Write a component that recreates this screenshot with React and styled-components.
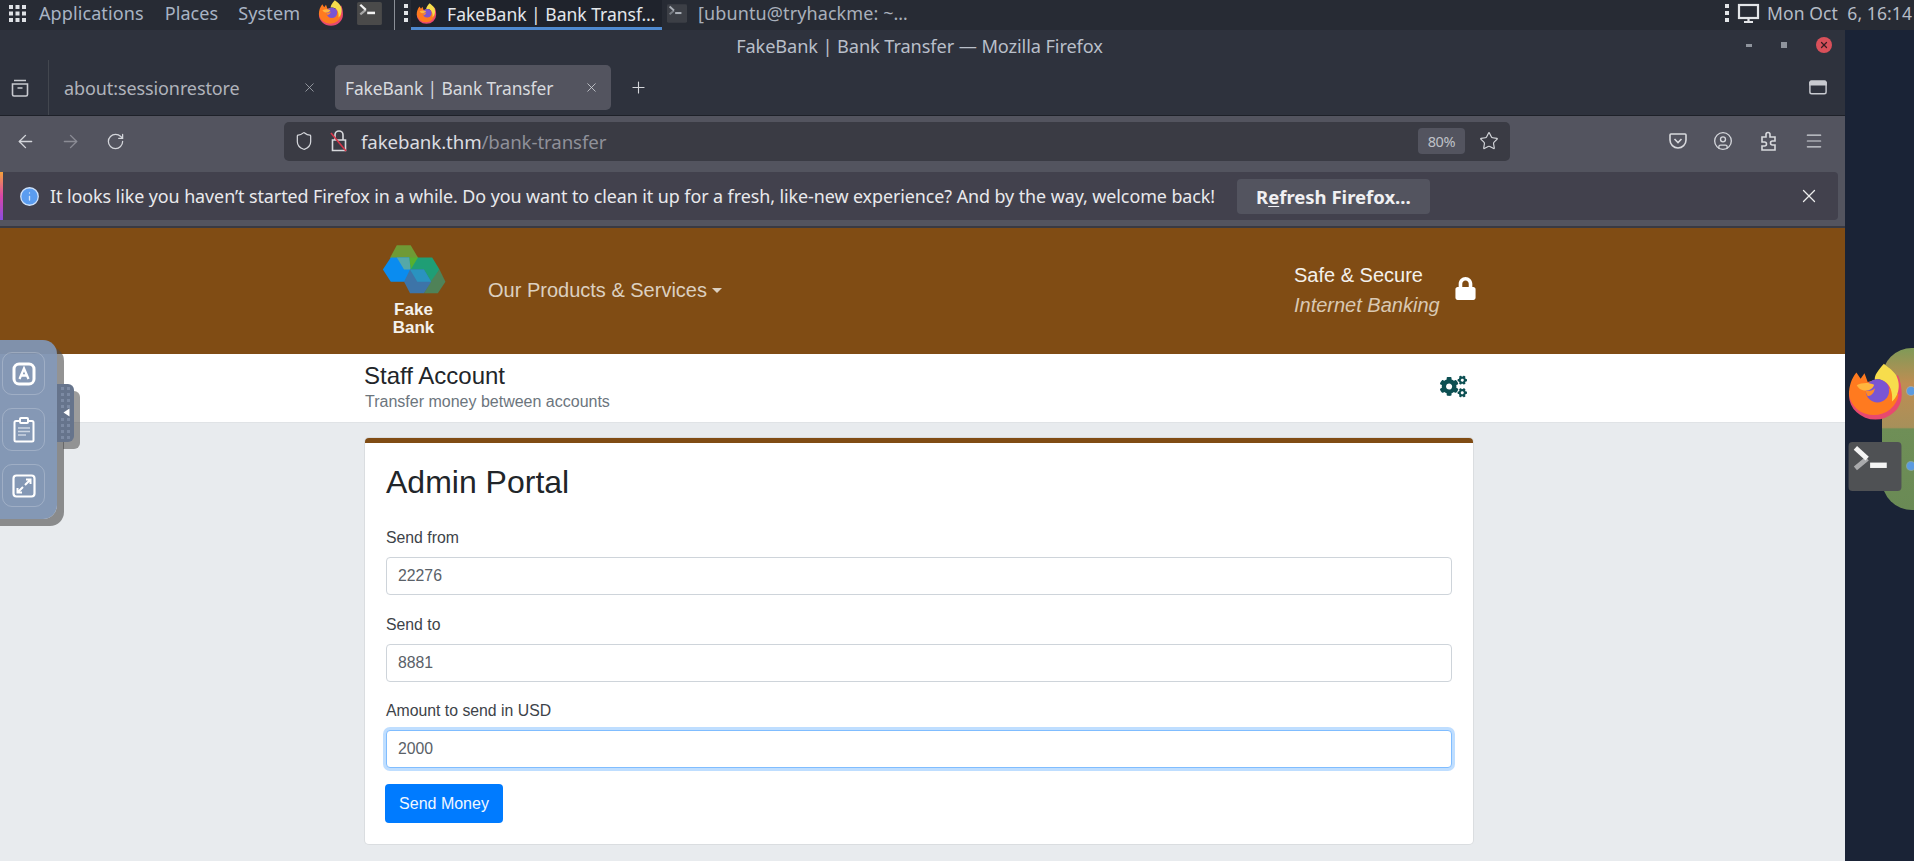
import React from "react";
import styled, { createGlobalStyle } from "styled-components";
import { ArrowLeft, ArrowRight, RotateCw, Shield, Star, Menu, X, Plus, Info, CircleUser } from "lucide-react";
import { FaCogs, FaLock } from "react-icons/fa";

const GlobalStyle = createGlobalStyle`
  html, body {
    margin: 0;
    padding: 0;
    height: 861px;
    overflow: hidden;
    background: #1a2336;
  }
  * { box-sizing: border-box; }
`;

const Page = styled.div`
  position: relative;
  width: 1914px;
  height: 861px;
  overflow: hidden;
  display: flex;
  flex-direction: column;
  font-family: "Noto Sans", sans-serif;
`;

/* desktop panel */
const TopPanel = styled.div`
  height: 30px;
  flex: none;
  padding-bottom: 4px;
  display: flex;
  align-items: center;
  background: #272b34;
  color: #a9b4c4;
  font-size: 18px;
  letter-spacing: 0.1px;
  white-space: nowrap;
`;

const PanelItem = styled.div`
  display: flex;
  align-items: center;
  margin-left: ${(p) => p.$ml || 0}px;
`;

const Separator = styled.div`
  align-self: flex-start;
  width: 1px;
  height: 30px;
  margin-left: ${(p) => p.$ml || 0}px;
  background: #8b8f97;
`;

const Handle = styled.div`
  display: grid;
  grid-gap: 3px;
  margin-left: ${(p) => p.$ml || 0}px;
  span {
    width: 4px;
    height: 4px;
    background: #e3e5e8;
  }
`;

const TaskButton = styled.div`
  align-self: flex-start;
  width: 251px;
  height: 30px;
  flex: none;
  margin-left: 3px;
  padding-left: 5px;
  display: flex;
  align-items: center;
  background: #1f232c;
  border-bottom: 3px solid #4f8ad0;
  color: #e4e7eb;
  font-size: 17.5px;
  letter-spacing: 0;
  span {
    margin-left: 10px;
  }
`;

const DimTask = styled.div`
  width: 1058px;
  flex: none;
  margin-left: 5px;
  display: flex;
  align-items: center;
  color: #a9b0bb;
  span {
    margin-left: 11px;
  }
`;

const Clock = styled.div`
  margin-left: 7px;
  color: #b5bcc7;
  font-size: 17.5px;
  white-space: pre;
`;

const Body = styled.div`
  flex: 1;
  display: flex;
  min-height: 0;
`;

const Browser = styled.div`
  width: 1845px;
  flex: none;
  display: flex;
  flex-direction: column;
  background: #e8ebee;
`;

/* firefox window chrome */
const TitleBar = styled.div`
  height: 30px;
  flex: none;
  display: grid;
  grid-template-columns: 1fr auto 1fr;
  align-items: center;
  background: #2e323d;
  color: #b9bfc9;
  font-size: 18.2px;
  letter-spacing: -0.1px;
`;

const TitleText = styled.div`
  margin-left: -6px;
  padding-top: 2px;
`;

const WindowControls = styled.div`
  justify-self: end;
  display: flex;
  align-items: center;
  gap: 29px;
  padding-right: 13px;
`;

const MiniGlyph = styled.span`
  display: block;
  width: ${(p) => p.$w}px;
  height: ${(p) => p.$h}px;
  background: #8f949d;
`;

const CloseDot = styled.span`
  width: 16px;
  height: 16px;
  border-radius: 50%;
  background: #d9505a;
  color: #3a1c22;
  display: flex;
  align-items: center;
  justify-content: center;
`;

const TabRow = styled.div`
  height: 56px;
  flex: none;
  display: flex;
  align-items: center;
  background: #2e323d;
  border-bottom: 1px solid #1e2129;
  color: #cfd2d8;
`;

const IconCell = styled.div`
  display: flex;
  align-items: center;
  justify-content: center;
  flex: none;
  width: ${(p) => p.$w || 24}px;
  margin-left: ${(p) => p.$ml || 0}px;
  margin-right: ${(p) => p.$mr || 0}px;
  color: ${(p) => p.$color || "#d4d6db"};
`;

const TabDivider = styled.div`
  width: 1px;
  height: 55px;
  margin-left: ${(p) => p.$ml}px;
  background: #43474f;
`;

const Tab = styled.div`
  height: 45px;
  width: ${(p) => p.$w}px;
  flex: none;
  border-radius: 5px;
  display: flex;
  align-items: center;
  justify-content: space-between;
  padding: 0 ${(p) => p.$pr}px 0 ${(p) => p.$pl}px;
  background: ${(p) => (p.$active ? "#53545f" : "transparent")};
  color: ${(p) => (p.$active ? "#d8dade" : "#b0b3bb")};
  font-size: ${(p) => (p.$active ? 17.4 : 18)}px;
  letter-spacing: -0.1px;
  white-space: nowrap;
`;

const Toolbar = styled.div`
  height: 56px;
  flex: none;
  padding-bottom: 6px;
  display: flex;
  align-items: center;
  background: #53545f;
`;

const UrlBar = styled.div`
  width: 1226px;
  height: 39px;
  margin-left: 157px;
  flex: none;
  display: flex;
  align-items: center;
  border-radius: 5px;
  background: #3a3b44;
  color: #dcdde1;
  font-size: 18.7px;
  letter-spacing: -0.1px;
`;

const UrlText = styled.div`
  margin-left: 10px;
  flex: 1;
  em {
    font-style: normal;
    color: #8f9099;
  }
`;

const ZoomBadge = styled.div`
  width: 47px;
  height: 26px;
  border-radius: 4px;
  background: #53545f;
  color: #bfc1c7;
  font-size: 14.5px;
  letter-spacing: -0.3px;
  display: flex;
  align-items: center;
  justify-content: center;
`;

const NoticeWrap = styled.div`
  height: 56px;
  flex: none;
  background: #53545f;
  padding-right: 7px;
  border-bottom: 2px solid #393a43;
`;

const Notice = styled.div`
  height: 48px;
  display: flex;
  align-items: center;
  background: #42414d;
  border-radius: 0 4px 4px 0;
  color: #e9e9ec;
  font-size: 17.9px;
  letter-spacing: -0.07px;
  white-space: nowrap;
  &::before {
    content: "";
    width: 3px;
    height: 48px;
    background: linear-gradient(#f5a13a, #d946a8 50%, #8a4ce0);
  }
`;

const NoticeText = styled.div`
  margin-left: 10px;
  width: 1187px;
`;

const RefreshButton = styled.div`
  width: 193px;
  height: 35px;
  flex: none;
  border-radius: 4px;
  background: #53545f;
  color: #f0f0f2;
  font-size: 18.5px;
  font-weight: 700;
  letter-spacing: 0;
  display: flex;
  align-items: center;
  justify-content: center;
  u {
    text-underline-offset: 2px;
  }
`;

/* the bank page */
const SiteHeader = styled.header`
  height: 126px;
  flex: none;
  padding-left: 382px;
  display: flex;
  background: #804c14;
`;

const Brand = styled.div`
  width: 64px;
  padding-top: 17px;
  display: flex;
  flex-direction: column;
  align-items: center;
  color: #f4f1ec;
  font-family: "Liberation Sans", Arial, sans-serif;
  font-size: 17px;
  font-weight: 700;
  line-height: 18px;
  text-align: center;
  div {
    margin-top: 7px;
    margin-left: -1px;
  }
`;

const NavLink = styled.div`
  margin-left: 42px;
  margin-top: 50px;
  display: flex;
  align-items: center;
  height: 24px;
  color: #dcd0c0;
  font-family: "Liberation Sans", Arial, sans-serif;
  font-size: 20px;
  &::after {
    content: "";
    margin-left: 5px;
    border-top: 5px solid #dcd0c0;
    border-left: 5px solid transparent;
    border-right: 5px solid transparent;
  }
`;

const SecureBlock = styled.div`
  margin-left: 572px;
  padding-top: 33px;
  width: 161px;
  flex: none;
  color: #f4f1ec;
  font-family: "Liberation Sans", Arial, sans-serif;
  font-size: 20px;
  line-height: 29.5px;
  em {
    display: block;
    color: #d9c8b2;
  }
`;

const LockCell = styled.div`
  margin-top: 49px;
  margin-left: -1px;
  color: #fff;
`;

const SubHeader = styled.div`
  height: 69px;
  flex: none;
  padding: 7px 0 0 365px;
  display: flex;
  background: #fff;
  border-bottom: 1px solid #e0e3e6;
  font-family: "Liberation Sans", Arial, sans-serif;
`;

const SubTitles = styled.div`
  width: 1075px;
  h2 {
    margin: 0 0 0 -1px;
    font-size: 24px;
    font-weight: 400;
    line-height: 29px;
    color: #212529;
  }
  p {
    margin: 2px 0 0;
    font-size: 16px;
    line-height: 20px;
    color: #6c757d;
  }
`;

const GearCell = styled.div`
  margin-top: 12px;
  color: #0c4f52;
`;

const Main = styled.main`
  flex: 1;
  padding: 15px 0 0 365px;
  background: #e8ebee;
  font-family: "Liberation Sans", Arial, sans-serif;
`;

const Card = styled.section`
  width: 1108px;
  height: 406px;
  padding: 20px 21px 0;
  border-top: 5px solid #804c14;
  border-radius: 4px;
  background: #fff;
  box-shadow: 0 0 0 1px rgba(0, 0, 0, 0.06);
  h1 {
    margin: 0 0 25px;
    font-size: 32px;
    font-weight: 400;
    line-height: 38px;
    color: #212529;
  }
`;

const Fields = styled.div`
  display: grid;
  grid-gap: 17.5px;
`;

const Field = styled.label`
  display: block;
  font-size: 15.8px;
  line-height: 24px;
  color: #3d4349;
`;

const Input = styled.input`
  display: block;
  width: 100%;
  height: 38px;
  margin-top: 7px;
  padding: 0 11px;
  border: 1.5px solid ${(p) => (p.$focused ? "#80bdff" : "#ced4da")};
  border-radius: 4px;
  outline: none;
  background: #fff;
  color: #5a6168;
  font-family: "Liberation Sans", Arial, sans-serif;
  font-size: 15.8px;
  box-shadow: ${(p) => (p.$focused ? "0 0 0 3px rgba(0, 123, 255, 0.25)" : "none")};
`;

const SendButton = styled.button`
  display: block;
  width: 118px;
  height: 39px;
  margin: 16px 0 0 -1px;
  border: 0;
  border-radius: 4px;
  background: #007bff;
  color: #f0f7ff;
  font-family: "Liberation Sans", Arial, sans-serif;
  font-size: 16px;
`;

/* remote desktop side panel lying over the page */
const SidePanel = styled.div`
  position: absolute;
  left: -10px;
  top: 340px;
  width: 67px;
  height: 179px;
  padding: 12px 0 0 12px;
  display: flex;
  flex-direction: column;
  gap: 13px;
  border-radius: 0 14px 14px 0;
  background: rgba(128, 148, 178, 0.96);
  box-shadow: 7px 7px 0 rgba(75, 75, 75, 0.6);
`;

const SideButton = styled.div`
  width: 43px;
  height: 43px;
  border: 1px solid rgba(255, 255, 255, 0.22);
  border-radius: 10px;
  display: flex;
  align-items: center;
  justify-content: center;
`;

const SideHandle = styled.div`
  position: absolute;
  left: 57px;
  top: 384px;
  width: 17px;
  height: 58px;
  border-radius: 0 6px 6px 0;
  background: #66748c;
  box-shadow: 6px 7px 0 rgba(75, 75, 75, 0.55);
  display: flex;
  align-items: center;
  justify-content: center;
`;

const Desktop = styled.div`
  position: relative;
  flex: 1;
  background: #1a2336;
`;

const Blob = styled.div`
  position: absolute;
  left: 37px;
  top: 318px;
  width: 60px;
  height: 162px;
  border-radius: 30px;
  background: linear-gradient(#7f9a58 0, #bf8d52 22%, #a7905a 49%, #6f8f57 50%, #6a8a55 100%);
`;

const DockDot = styled.span`
  position: absolute;
  left: 62px;
  top: ${(p) => p.$top}px;
  width: 8px;
  height: 8px;
  border-radius: 50%;
  background: #5b9be0;
  box-shadow: 0 0 0 1px rgba(150, 190, 240, 0.5);
`;

const DockIcon = styled.div`
  position: absolute;
  left: ${(p) => p.$left}px;
  top: ${(p) => p.$top}px;
`;

function FirefoxIcon({ size }) {
  return (
    <svg width={size} height={size} viewBox="80 66 168 176">
      <path d="M82 165a81 75 0 0 0 163 0c0-24-4-44-12-62l-60 40z" fill="#e8496f" />
      <path d="M105 95l13 20 12-17 10 27 25-7 70 45a77 72 0 0 1-153 0c0-26 8-50 23-68z" fill="#ff7a1f" />
      <path d="M190 68c-20 22-30 37-28 50 33-6 58 22 53 67 20-15 30-55 10-85-10-15-25-22-35-32z" fill="#f7dd4c" />
      <circle cx="170" cy="152" r="36" fill="#7a55d2" />
      <path d="M106 135c14-8 36-10 54-2-4 12-16 20-32 18-10-1-18-8-22-16z" fill="#ffb53e" />
      <path d="M134 150c10 4 20 2 28-6-2 14-10 24-22 24-4-6-6-12-6-18z" fill="#ff8a28" />
    </svg>
  );
}

function TerminalTile({ w, h, bg, color }) {
  return (
    <svg width={w} height={h} viewBox="0 0 54 50">
      <rect width="54" height="50" rx="4" fill={bg} />
      <path d="M7 6l12 11" stroke={color} strokeWidth="5" fill="none" />
      <path d="M19 17L7 27" stroke={color} strokeWidth="5" opacity="0.55" fill="none" />
      <rect x="22" y="21" width="17" height="5.5" fill={color} />
    </svg>
  );
}

function FakeBankLogo() {
  return (
    <svg width="64" height="49" viewBox="64 44 192 148">
      <polygon points="108,45 150,45 172,82 150,118 108,118 88,82" fill="#6f9a35" />
      <polygon points="90,82 146,82 170,118 146,155 90,155 66,118" fill="#0a8cf0" />
      <polygon points="170,82 215,82 237,118 215,155 170,155 148,118" fill="#1f9e75" />
      <polygon points="108,82 146,82 150,118 130,118" fill="#55a8a8" />
      <polygon points="146,82 172,82 150,118" fill="#55b030" />
      <polygon points="237,118 255,155 232,190 190,190 210,155" fill="#4f8258" />
      <polygon points="148,118 190,118 212,155 190,190 148,190 130,155" fill="#3d74a8" />
      <polygon points="148,118 190,118 212,155 170,155" fill="#2a93c0" />
    </svg>
  );
}

function LibraryIcon() {
  return (
    <svg width="20" height="20" viewBox="0 0 20 20" fill="none" stroke="#c8cad0" strokeWidth="1.6">
      <path d="M4 2.5h12M2.5 6h15v10.5a1.5 1.5 0 0 1-1.5 1.5H4a1.5 1.5 0 0 1-1.5-1.5zM7.5 10h5" />
    </svg>
  );
}

function SidebarIcon() {
  return (
    <svg width="18" height="15" viewBox="0 0 20 16" fill="none" stroke="#c8cad0" strokeWidth="1.6">
      <rect x="1" y="1" width="18" height="14" rx="2" />
      <path d="M1 5h18V2.5L18 1H2L1 2.5z" fill="#c8cad0" />
    </svg>
  );
}

function InsecureLock() {
  return (
    <svg width="18" height="24" viewBox="0 0 18 24" fill="none" stroke="#d8d9dd" strokeWidth="1.6">
      <path d="M5 11V6a4 4 0 0 1 8 0v5M2.5 11h13v10.5h-13z" />
      <path d="M1 4l15 18" stroke="#d7364a" />
    </svg>
  );
}

function PocketIcon() {
  return (
    <svg width="18" height="18" viewBox="0 0 18 18" fill="none" stroke="#d8d9dd" strokeWidth="1.6">
      <path d="M2 2h14a1 1 0 0 1 1 1v5a8 8 0 0 1-16 0V3a1 1 0 0 1 1-1z" />
      <path d="M5.5 7L9 10.5 12.5 7" />
    </svg>
  );
}

function ExtensionIcon() {
  return (
    <svg width="18" height="20" viewBox="0 0 18 20" fill="none" stroke="#d8d9dd" strokeWidth="1.6">
      <path d="M2 6h4V3.5a2 2 0 0 1 4 0V6h5v4h-2.5a2 2 0 0 0 0 4H15v5H2v-4h2.5a2 2 0 0 0 0-4H2z" />
    </svg>
  );
}

function MonitorIcon() {
  return (
    <svg width="23" height="21" viewBox="0 0 23 21" fill="none" stroke="#e3e5e8" strokeWidth="2.2">
      <rect x="2" y="2" width="19" height="13" />
      <path d="M11.5 15v3M7 19h9" />
    </svg>
  );
}

function GridIcon() {
  return (
    <svg width="17" height="17" viewBox="0 0 17 17" fill="#dfe2e6">
      {[0, 6.5, 13].map((y) =>
        [0, 6.5, 13].map((x) => <rect key={`${x}-${y}`} x={x} y={y} width="4" height="4" />)
      )}
    </svg>
  );
}

function FontIcon() {
  return (
    <svg width="24" height="24" viewBox="0 0 24 24" fill="none">
      <rect x="2" y="2" width="20" height="20" rx="5" stroke="#fff" strokeWidth="3" />
      <path d="M7.5 17L12 6.5 16.5 17M9 13.5h6" stroke="#fff" strokeWidth="2.3" />
    </svg>
  );
}

function ClipboardIcon() {
  return (
    <svg width="22" height="26" viewBox="0 0 22 26" fill="none" stroke="#fff" strokeWidth="1.8">
      <rect x="1.5" y="4" width="19" height="20.5" rx="1.5" strokeWidth="2" />
      <rect x="7" y="1" width="8" height="5" rx="1" fill="#8094b2" strokeWidth="2" />
      <path d="M5 11h12M5 14.5h12M5 18h8" stroke="#ccd5e2" strokeWidth="1.4" />
    </svg>
  );
}

function ScaleIcon() {
  return (
    <svg width="24" height="24" viewBox="0 0 24 24" fill="none" stroke="#fff">
      <rect x="1.5" y="1.5" width="21" height="21" rx="3" strokeWidth="2.2" />
      <path d="M13 11l5-5M14 5.500h4.500V10M11 13l-5 5M5.500 14v4.500H10" strokeWidth="2" />
    </svg>
  );
}

function GripDots() {
  return (
    <svg width="10" height="52" viewBox="0 0 10 52">
      {[0, 6, 12, 18, 31, 37, 43, 49].map((y) => (
        <g key={y} fill="#7c8aa3">
          <rect x="0" y={y} width="3" height="3" />
          <rect x="6" y={y} width="3" height="3" />
        </g>
      ))}
      <path d="M8.5 21.500v8l-6-4z" fill="#fff" />
    </svg>
  );
}

export default function App() {
  return (
    <>
      <GlobalStyle />
      <Page>
        <TopPanel>
          <PanelItem $ml={9}><GridIcon /></PanelItem>
          <PanelItem $ml={13}>Applications</PanelItem>
          <PanelItem $ml={21}>Places</PanelItem>
          <PanelItem $ml={20}>System</PanelItem>
          <PanelItem $ml={18}><FirefoxIcon size={26} /></PanelItem>
          <PanelItem $ml={13}><TerminalTile w={25} h={23} bg="#4a4a4a" color="#f2f2f2" /></PanelItem>
          <Separator $ml={12} />
          <Handle $ml={9}><span /><span /><span /></Handle>
          <TaskButton>
            <FirefoxIcon size={21} />
            <span>FakeBank | Bank Transf…</span>
          </TaskButton>
          <DimTask>
            <TerminalTile w={20} h={19} bg="#3c3f46" color="#a9aeb6" />
            <span>[ubuntu@tryhackme: ~…</span>
          </DimTask>
          <Handle><span /><span /><span /></Handle>
          <PanelItem $ml={8}><MonitorIcon /></PanelItem>
          <Clock>{"Mon Oct  6, 16:14"}</Clock>
        </TopPanel>
        <Body>
          <Browser>
            <TitleBar>
              <span />
              <TitleText>FakeBank | Bank Transfer — Mozilla Firefox</TitleText>
              <WindowControls>
                <MiniGlyph $w={6} $h={3} />
                <MiniGlyph $w={6} $h={6} />
                <CloseDot><X size={10} strokeWidth={3} /></CloseDot>
              </WindowControls>
            </TitleBar>
            <TabRow>
              <IconCell $ml={8}><LibraryIcon /></IconCell>
              <TabDivider $ml={16} />
              <Tab $w={286} $pl={15} $pr={18}>
                <span>about:sessionrestore</span>
                <X size={15} strokeWidth={1.3} color="#a8abb3" />
              </Tab>
              <Tab $w={276} $pl={10} $pr={12} $active>
                <span>FakeBank | Bank Transfer</span>
                <X size={15} strokeWidth={1.3} color="#d2d4d9" />
              </Tab>
              <IconCell $ml={15}><Plus size={19} strokeWidth={1.4} /></IconCell>
              <IconCell $ml={1156}><SidebarIcon /></IconCell>
            </TabRow>
            <Toolbar>
              <IconCell $ml={13}><ArrowLeft size={21} strokeWidth={1.6} /></IconCell>
              <IconCell $ml={21} $color="#8b8c95"><ArrowRight size={21} strokeWidth={1.6} /></IconCell>
              <IconCell $ml={21}><RotateCw size={19} strokeWidth={1.6} /></IconCell>
              <UrlBar>
                <IconCell $ml={8}><Shield size={20} strokeWidth={1.5} /></IconCell>
                <IconCell $ml={11}><InsecureLock /></IconCell>
                <UrlText>fakebank.thm<em>/bank-transfer</em></UrlText>
                <ZoomBadge>80%</ZoomBadge>
                <IconCell $ml={12} $mr={9}><Star size={20} strokeWidth={1.4} /></IconCell>
              </UrlBar>
              <IconCell $ml={156}><PocketIcon /></IconCell>
              <IconCell $ml={21}><CircleUser size={20} strokeWidth={1.6} /></IconCell>
              <IconCell $ml={22}><ExtensionIcon /></IconCell>
              <IconCell $ml={21}><Menu size={20} strokeWidth={1.4} /></IconCell>
            </Toolbar>
            <NoticeWrap>
              <Notice>
                <IconCell $ml={15} $w={22}><Info size={21} fill="#5a9cf0" color="#cfe2fb" strokeWidth={1.5} /></IconCell>
                <NoticeText>It looks like you haven’t started Firefox in a while. Do you want to clean it up for a fresh, like-new experience? And by the way, welcome back!</NoticeText>
                <RefreshButton><span>R<u>e</u>fresh Firefox…</span></RefreshButton>
                <IconCell $ml={367}><X size={22} strokeWidth={1.4} color="#eceded" /></IconCell>
              </Notice>
            </NoticeWrap>
            <SiteHeader>
              <Brand>
                <FakeBankLogo />
                <div>Fake<br />Bank</div>
              </Brand>
              <NavLink>Our Products &amp; Services</NavLink>
              <SecureBlock>
                Safe &amp; Secure
                <em>Internet Banking</em>
              </SecureBlock>
              <LockCell><FaLock size={23} /></LockCell>
            </SiteHeader>
            <SubHeader>
              <SubTitles>
                <h2>Staff Account</h2>
                <p>Transfer money between accounts</p>
              </SubTitles>
              <GearCell><FaCogs size={27} /></GearCell>
            </SubHeader>
            <Main>
              <Card>
                <h1>Admin Portal</h1>
                <Fields>
                  <Field>
                    Send from
                    <Input readOnly value="22276" />
                  </Field>
                  <Field>
                    Send to
                    <Input readOnly value="8881" />
                  </Field>
                  <Field>
                    Amount to send in USD
                    <Input readOnly $focused value="2000" />
                  </Field>
                </Fields>
                <SendButton>Send Money</SendButton>
              </Card>
            </Main>
          </Browser>
          <Desktop>
            <Blob />
            <DockDot $top={357} />
            <DockDot $top={432} />
            <DockIcon $left={2} $top={333}><FirefoxIcon size={57} /></DockIcon>
            <DockIcon $left={3} $top={412}><TerminalTile w={54} h={49} bg="#4f5154" color="#f4f4f4" /></DockIcon>
          </Desktop>
        </Body>
        <SidePanel>
          <SideButton><FontIcon /></SideButton>
          <SideButton><ClipboardIcon /></SideButton>
          <SideButton><ScaleIcon /></SideButton>
        </SidePanel>
        <SideHandle><GripDots /></SideHandle>
      </Page>
    </>
  );
}
